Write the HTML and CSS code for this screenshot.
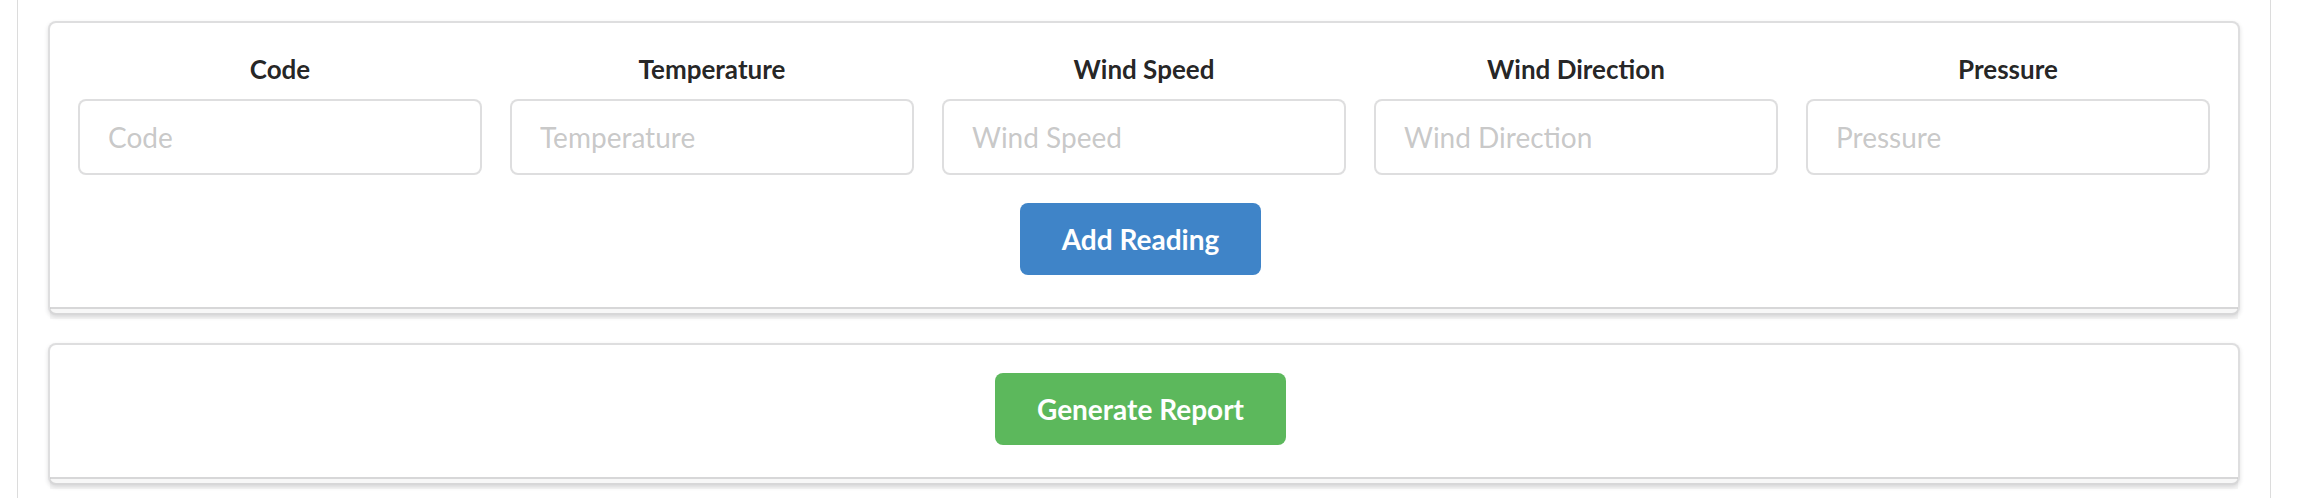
FILE: index.html
```html
<!DOCTYPE html>
<html lang="en">
<head>
<meta charset="utf-8">
<title>Readings</title>
<link rel="stylesheet" href="styles.css">
</head>
<body>
<div class="page">
  <form class="segment stacked">
    <div class="fields">
      <div class="field"><label>Code</label><input type="text" placeholder="Code"></div>
      <div class="field"><label>Temperature</label><input type="text" placeholder="Temperature"></div>
      <div class="field"><label>Wind Speed</label><input type="text" placeholder="Wind Speed"></div>
      <div class="field"><label>Wind Direction</label><input type="text" placeholder="Wind Direction"></div>
      <div class="field"><label>Pressure</label><input type="text" placeholder="Pressure"></div>
    </div>
    <div class="actions"><button type="button" class="btn btn-blue">Add Reading</button></div>
  </form>
  <div class="segment stacked">
    <div class="actions"><button type="button" class="btn btn-green">Generate Report</button></div>
  </div>
</div>
</body>
</html>
```
FILE: styles.css
```css
html, body {
  margin: 0;
  background: #ffffff;
}
body {
  font-family: Lato, "Helvetica Neue", Arial, sans-serif;
  color: rgba(0, 0, 0, 0.87);
}
.page {
  box-sizing: border-box;
  margin-left: 17px;
  width: 2254px;
  min-height: 498px;
  border-left: 1px solid #dcdcdc;
  border-right: 1px solid #dcdcdc;
  padding: 21px 30px 0;
}
.segment {
  position: relative;
  box-sizing: border-box;
  background: #ffffff;
  border: 2px solid rgba(34, 36, 38, 0.15);
  border-radius: 8px;
  box-shadow: 0 2px 4px 0 rgba(34, 36, 38, 0.15);
  padding: 28px 28px 38px;
  margin: 0 0 28px;
}
.segment.stacked::after {
  content: "";
  position: absolute;
  box-sizing: border-box;
  left: 0;
  bottom: -6px;
  width: 100%;
  height: 12px;
  border-top: 2px solid rgba(34, 36, 38, 0.15);
  background: rgba(0, 0, 0, 0.03);
}
.fields {
  display: flex;
  margin: 0 -14px 28px;
}
.field {
  flex: 1 1 0;
  min-width: 0;
  padding: 0 14px;
  text-align: center;
}
.field label {
  display: block;
  font-size: 26px;
  font-weight: 700;
  line-height: 37px;
  margin-bottom: 11px;
  color: rgba(0, 0, 0, 0.87);
}
.field input {
  display: block;
  box-sizing: border-box;
  width: 100%;
  height: 76px;
  margin: 0;
  padding: 19px 28px;
  font-family: Lato, "Helvetica Neue", Arial, sans-serif;
  font-size: 28px;
  line-height: 34px;
  color: rgba(0, 0, 0, 0.87);
  background: #ffffff;
  border: 2px solid rgba(34, 36, 38, 0.15);
  border-radius: 8px;
  outline: none;
  text-align: left;
}
.field input::placeholder {
  color: rgba(191, 191, 191, 0.87);
}
.actions {
  text-align: center;
  line-height: 0;
}
.btn {
  display: inline-block;
  margin: 0 7px 0 0;
  padding: 22px 42px;
  font-family: Lato, "Helvetica Neue", Arial, sans-serif;
  font-size: 28px;
  font-weight: 700;
  line-height: 28px;
  color: #ffffff;
  border: none;
  border-radius: 8px;
  cursor: pointer;
}
.btn-blue {
  background: #3f84c8;
}
.btn-green {
  background: #5cb85c;
}
```
